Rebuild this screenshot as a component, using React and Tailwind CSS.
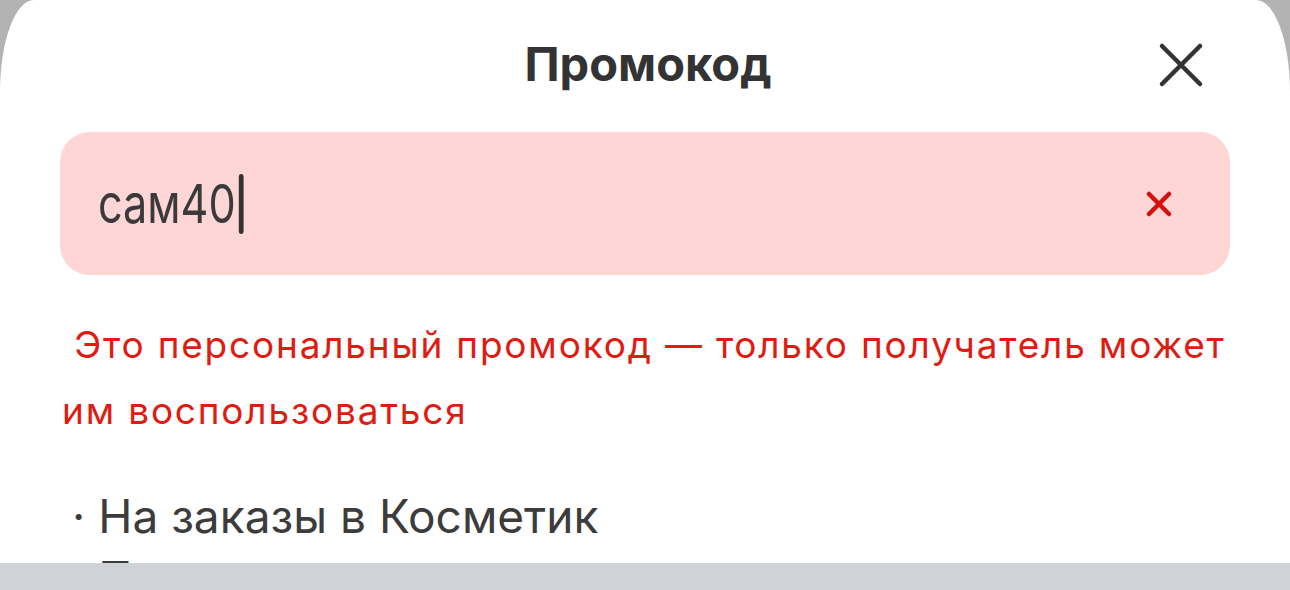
import React from "react";

export default function App() {
  return (
    <div className="w-[1290px] h-[590px] bg-[#b3b3b3] flex flex-col overflow-hidden" style={{ fontFamily: "Inter, 'Noto Sans', sans-serif" }}>
      <div className="flex-1 bg-white rounded-tl-[34px_92px] rounded-tr-[34px_92px] overflow-hidden flex flex-col">
        <div className="h-[132px] shrink-0 grid grid-cols-[1fr_auto_1fr] items-center">
          <div />
          <div className="text-[47px] font-bold text-[#333333] leading-none pb-[6px] pl-[6px]">Промокод</div>
          <div className="flex justify-end pr-[86px] pb-[2px]">
            <svg width="46" height="46" viewBox="0 0 46 46" fill="none">
              <path d="M4 4 L42 42 M42 4 L4 42" stroke="#333333" strokeWidth="4.5" strokeLinecap="round" />
            </svg>
          </div>
        </div>
        <div className="mx-[60px] h-[143px] shrink-0 rounded-[30px] bg-[#fdd6d5] flex items-center justify-between pl-[38px] pr-[58px]">
          <div className="flex items-center scale-x-[0.8] origin-left">
            <span className="text-[54px] text-[#3a3a3a] leading-none">сам40</span>
            <span className="ml-[4px] w-[6px] h-[60px] rounded-full bg-[#333333]" />
          </div>
          <svg width="26" height="26" viewBox="0 0 26 26" fill="none">
            <path d="M3 3 L23 23 M23 3 L3 23" stroke="#d4100c" strokeWidth="4.5" strokeLinecap="round" />
          </svg>
        </div>
        <div className="mt-[37px] px-[62px] text-[37px] tracking-[1.8px] leading-[66px] text-[#e01b12] whitespace-nowrap">
          <div>{"\u00A0Это персональный промокод — только получатель может"}</div>
          <div>им воспользоваться</div>
        </div>
        <div className="mt-[41px] px-[72px] text-[46px] leading-[62px] text-[#3c3c3c]">
          <div>· На заказы в Косметик</div>
          <div>· Применяется к товарам</div>
        </div>
      </div>
      <div className="h-[27px] shrink-0 bg-[#cfd2d9]" />
    </div>
  );
}
